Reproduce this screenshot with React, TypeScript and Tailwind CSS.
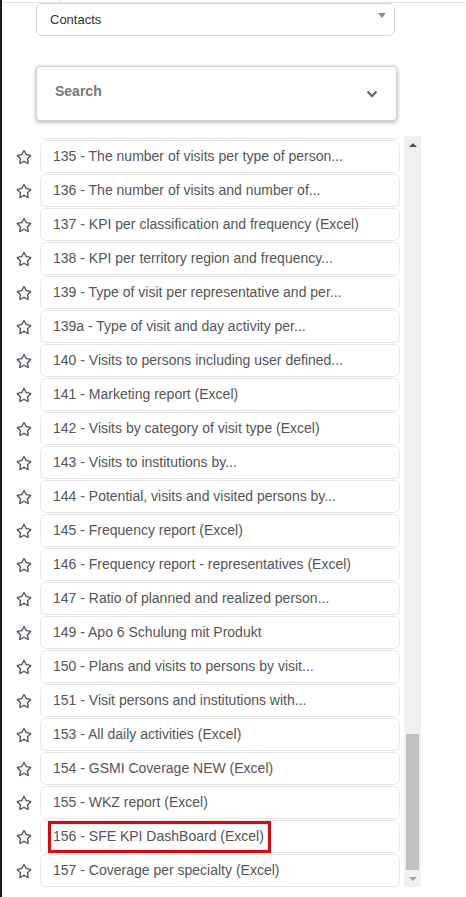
import { FaRegStar } from "react-icons/fa";

const reports = [
  "",
  "135 - The number of visits per type of person...",
  "136 - The number of visits and number of...",
  "137 - KPI per classification and frequency (Excel)",
  "138 - KPI per territory region and frequency...",
  "139 - Type of visit per representative and per...",
  "139a - Type of visit and day activity per...",
  "140 - Visits to persons including user defined...",
  "141 - Marketing report (Excel)",
  "142 - Visits by category of visit type (Excel)",
  "143 - Visits to institutions by...",
  "144 - Potential, visits and visited persons by...",
  "145 - Frequency report (Excel)",
  "146 - Frequency report - representatives (Excel)",
  "147 - Ratio of planned and realized person...",
  "149 - Apo 6 Schulung mit Produkt",
  "150 - Plans and visits to persons by visit...",
  "151 - Visit persons and institutions with...",
  "153 - All daily activities (Excel)",
  "154 - GSMI Coverage NEW (Excel)",
  "155 - WKZ report (Excel)",
  "156 - SFE KPI DashBoard (Excel)",
  "157 - Coverage per specialty (Excel)",
];

function ReportRow({ label, marked }: { label: string; marked?: boolean }) {
  return (
    <div className="mb-px flex items-center">
      <div className="flex w-[38px] shrink-0 justify-end pr-[8px] text-[#4f5666]">
        {label && <FaRegStar size={16} />}
      </div>
      <div className="relative flex h-[33px] w-[360px] items-center rounded-[6px] border border-[#e6e6e6] bg-white pl-[12px] text-[14px] text-[#555]">
        <span className="truncate">{label}</span>
        {marked && (
          <div className="absolute left-[7px] top-0 h-[32px] w-[223px] border-[3px] border-[#e8000b]" />
        )}
      </div>
    </div>
  );
}

function Scrollbar() {
  return (
    <div className="flex w-[17px] shrink-0 flex-col items-center bg-[#f0f0f0]">
      <div className="flex h-[17px] w-full items-center justify-center">
        <div className="h-0 w-0 border-x-[4px] border-b-[4px] border-x-transparent border-b-[#505050]" />
      </div>
      <div className="flex-1" />
      <div className="h-[136px] w-[13px] bg-[#c1c1c1]" />
      <div className="flex h-[17px] w-full items-center justify-center">
        <div className="h-0 w-0 border-x-[4px] border-t-[4px] border-x-transparent border-t-[#a3a3a3]" />
      </div>
    </div>
  );
}

export default function App() {
  return (
    <div
      className="h-[897px] w-[466px] overflow-hidden border-l-2 border-[#1c1c1c] bg-white"
      style={{ fontFamily: '"Liberation Sans", Arial, sans-serif' }}
    >
      <div className="flex h-[3px] border-b border-[#e3e3e3]">
        <div className="w-[58px] border-r border-[#e3e3e3]" />
      </div>

      <div className="ml-[34px] flex h-[33px] w-[359px] items-center justify-between rounded-[6px] border border-[#d3d7de] pl-[13px] pr-[8px] text-[13px] text-[#333]">
        <span>Contacts</span>
        <svg width="8" height="5" viewBox="0 0 8 5" className="-mt-[8px]">
          <path d="M0 0h8L4 5z" fill="#8a8a8a" />
        </svg>
      </div>

      <div className="ml-[34px] mt-[30px] flex h-[55px] w-[361px] items-center justify-between rounded-[4px] border border-[#d0d0d0] bg-white pl-[18px] pr-[18px] shadow-[0_1px_4px_rgba(0,0,0,0.35)]">
        <span className="-mt-[5px] text-[14px] font-bold text-[#777]">Search</span>
        <svg width="12" height="8" viewBox="0 0 12 8">
          <path d="M1.5 1.5 6 6l4.5-4.5" fill="none" stroke="#6b6b6b" strokeWidth="2.4" />
        </svg>
      </div>

      <div className="mt-[15px] flex h-[751px]">
        <div className="w-[402px] overflow-hidden">
          <div className="-mt-[30px]">
            {reports.map((r, i) => (
              <ReportRow key={i} label={r} marked={r.startsWith("156")} />
            ))}
          </div>
        </div>
        <Scrollbar />
      </div>
    </div>
  );
}
